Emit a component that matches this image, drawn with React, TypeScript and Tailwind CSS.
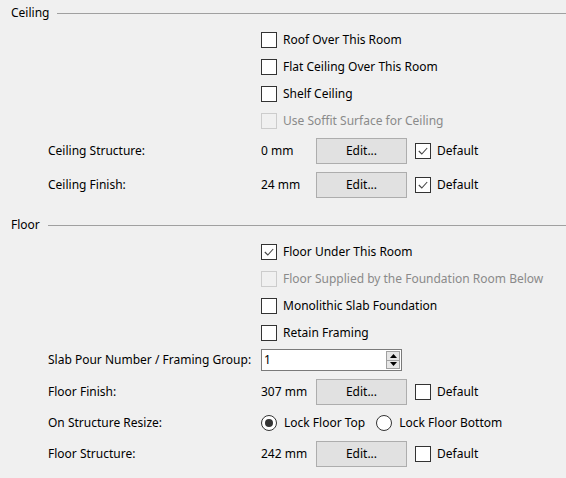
import * as React from 'react';

const font = { fontFamily: '"Noto Sans", "Open Sans", Arial, sans-serif' };

// little check glyph used inside ticked boxes
const Tick = () => (
    <svg width="12" height="12" viewBox="0 0 12 12" className="block">
        <polyline points="1.8,6 4.8,9 10.2,3" fill="none" stroke="#444" strokeWidth="1.1" />
    </svg>
);

const Check = ({ checked = false, disabled = false }: { checked?: boolean; disabled?: boolean }) => (
    <div
        className={
            'w-[16px] h-[16px] shrink-0 border flex items-center justify-center ' +
            (disabled ? 'border-[#cccccc] bg-[#f0f0f0]' : 'border-[#333333] bg-white')
        }
    >
        {checked && <Tick />}
    </div>
);

const Radio = ({ on = false }: { on?: boolean }) => (
    <div className="w-[16px] h-[16px] shrink-0 rounded-full border border-[#333333] bg-white flex items-center justify-center">
        {on && <div className="w-[8px] h-[8px] rounded-full bg-[#333333]" />}
    </div>
);

const Header = ({ title, className = '' }: { title: string; className?: string }) => (
    <div className={'h-[26px] flex items-center pl-[11px] ' + className}>
        <span>{title}</span>
        <div className="flex-1 h-px bg-[#a0a0a0] ml-[8px]" />
    </div>
);

const CheckRow = ({ label, checked, disabled }: { label: string; checked?: boolean; disabled?: boolean }) => (
    <div className="h-[27px] flex items-center pl-[261px] gap-[6px]">
        <Check checked={checked} disabled={disabled} />
        <span className={disabled ? 'text-[#8a8a8a]' : ''}>{label}</span>
    </div>
);

const EditRow = ({ label, value, def, h }: { label: string; value: string; def: boolean; h: string }) => (
    <div className={'flex items-center pl-[48px] whitespace-nowrap ' + h}>
        <span className="w-[213px]">{label}</span>
        <span className="w-[55px]">{value}</span>
        <button className="w-[91px] h-[26px] bg-[#e1e1e1] border border-[#adadad] flex items-center justify-center">
            Edit...
        </button>
        <div className="ml-[8px] flex items-center gap-[6px]">
            <Check checked={def} />
            <span>Default</span>
        </div>
    </div>
);

export default function App() {
    return (
        <div className="w-[566px] h-[478px] bg-[#f0f0f0] text-black text-[12px] overflow-hidden" style={font}>
            <Header title="Ceiling" />
            <CheckRow label="Roof Over This Room" />
            <CheckRow label="Flat Ceiling Over This Room" />
            <CheckRow label="Shelf Ceiling" />
            <CheckRow label="Use Soffit Surface for Ceiling" disabled />
            <EditRow label="Ceiling Structure:" value="0 mm" def h="h-[34px]" />
            <EditRow label="Ceiling Finish:" value="24 mm" def h="h-[34px]" />

            <Header title="Floor" className="mt-[10px]" />
            <CheckRow label="Floor Under This Room" checked />
            <CheckRow label="Floor Supplied by the Foundation Room Below" disabled />
            <CheckRow label="Monolithic Slab Foundation" />
            <CheckRow label="Retain Framing" />

            {/* slab pour spinner */}
            <div className="h-[28px] flex items-center pl-[48px] whitespace-nowrap">
                <span className="w-[213px]">Slab Pour Number / Framing Group:</span>
                <div className="w-[141px] h-[22px] bg-white border border-[#7a7a7a] flex items-center">
                    <span className="flex-1 pl-[2px]">1</span>
                    <div className="w-[14px] h-[18px] mr-[1px] flex flex-col border border-[#a0a0a0]">
                        <div className="flex-1 bg-[#e6e6e6] border-b border-[#a0a0a0] flex items-center justify-center">
                            <svg width="7" height="4" viewBox="0 0 7 4"><polygon points="0,4 7,4 3.5,0" fill="#000" /></svg>
                        </div>
                        <div className="flex-1 bg-[#e6e6e6] flex items-center justify-center">
                            <svg width="7" height="4" viewBox="0 0 7 4"><polygon points="0,0 7,0 3.5,4" fill="#000" /></svg>
                        </div>
                    </div>
                </div>
            </div>

            <EditRow label="Floor Finish:" value="307 mm" def={false} h="h-[35px]" />

            <div className="h-[28px] flex items-center pl-[48px] whitespace-nowrap">
                <span className="w-[213px]">On Structure Resize:</span>
                <div className="flex items-center gap-[7px]">
                    <Radio on />
                    <span>Lock Floor Top</span>
                </div>
                <div className="flex items-center gap-[7px] ml-[11px]">
                    <Radio />
                    <span>Lock Floor Bottom</span>
                </div>
            </div>

            <EditRow label="Floor Structure:" value="242 mm" def={false} h="h-[34px]" />
        </div>
    );
}
